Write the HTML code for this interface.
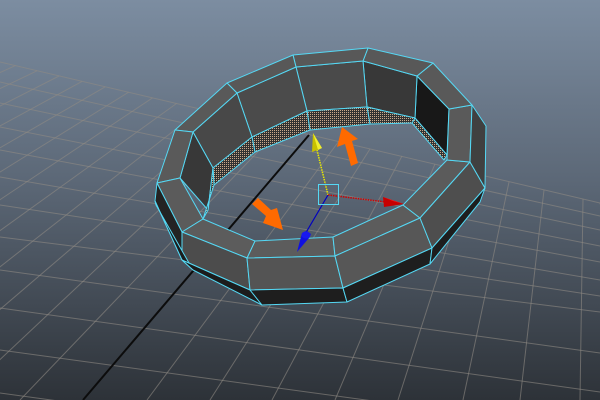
<!DOCTYPE html>
<html><head><meta charset="utf-8"><style>
html,body{margin:0;padding:0;width:600px;height:400px;overflow:hidden;background:#56626f}
svg{display:block;overflow:hidden}
</style></head><body>
<svg width="600" height="400" viewBox="0 0 600 400" xmlns="http://www.w3.org/2000/svg">
<defs>
<linearGradient id="bg" x1="0" y1="0" x2="0" y2="1">
<stop offset="0" stop-color="#7c8da1"/>
<stop offset="0.45" stop-color="#5c6877"/>
<stop offset="1" stop-color="#2d3238"/>
</linearGradient>
<pattern id="dots" width="2" height="2" patternUnits="userSpaceOnUse">
<rect width="2" height="2" fill="#323232"/>
<rect width="1" height="1" fill="#c9a88a"/>
</pattern>
</defs>
<rect width="600" height="400" fill="url(#bg)"/>
<g stroke="#8f8a84" stroke-width="1" stroke-opacity="0.6" fill="none">
<line x1="15.5" y1="65.6" x2="-725" y2="400"/>
<line x1="37" y1="70.8" x2="-650" y2="400"/>
<line x1="59" y1="76" x2="-577" y2="400"/>
<line x1="82" y1="81.4" x2="-505" y2="400"/>
<line x1="105" y1="86.9" x2="-435" y2="400"/>
<line x1="128.6" y1="92.2" x2="-367" y2="400"/>
<line x1="152.4" y1="97.9" x2="-300" y2="400"/>
<line x1="176.5" y1="103.5" x2="-235" y2="400"/>
<line x1="201" y1="109.4" x2="-170" y2="400"/>
<line x1="227" y1="115.4" x2="-106" y2="400"/>
<line x1="253" y1="121.5" x2="-43" y2="400"/>
<line x1="280.6" y1="128" x2="20" y2="400"/>
<line x1="339" y1="141" x2="147" y2="400"/>
<line x1="370" y1="149" x2="210" y2="400"/>
<line x1="402" y1="156" x2="272" y2="400"/>
<line x1="435" y1="164" x2="335" y2="400"/>
<line x1="471" y1="172" x2="398" y2="400"/>
<line x1="509" y1="182" x2="463" y2="400"/>
<line x1="544" y1="190" x2="520" y2="400"/>
<line x1="583" y1="199" x2="580" y2="400"/>
<line x1="600" y1="203" x2="607" y2="230"/>
<line x1="0" y1="62" x2="600" y2="203"/>
<line x1="0" y1="82" x2="600" y2="216"/>
<line x1="0" y1="103" x2="600" y2="230"/>
<line x1="0" y1="127" x2="600" y2="246"/>
<line x1="0" y1="150" x2="600" y2="262"/>
<line x1="0" y1="177" x2="600" y2="280"/>
<line x1="0" y1="205" x2="600" y2="296"/>
<line x1="0" y1="237" x2="600" y2="312"/>
<line x1="0" y1="270" x2="600" y2="353"/>
<line x1="0" y1="308" x2="600" y2="392"/>
<line x1="0" y1="350" x2="600" y2="432"/>
<line x1="0" y1="393" x2="600" y2="475"/>
</g>
<line x1="309" y1="135" x2="83" y2="400" stroke="#0c0c0c" stroke-width="2"/>

<g stroke="#55d8f4" stroke-width="1" stroke-linejoin="round">
<polygon points="449,109 417,76 415,118 447,155" fill="#181818"/>
<polygon points="417,76 363,61 367,107 415,118" fill="#383838"/>
<polygon points="363,61 296,67 307,111 367,107" fill="#4a4a4a"/>
<polygon points="296,67 237,93 252,137 307,111" fill="#4b4b4b"/>
<polygon points="237,93 193,132 213,168 252,137" fill="#484848"/>
<polygon points="193,132 180,178 208,210 213,168" fill="#383838"/>
<polygon points="447,155 415,118 412,123 444,160" fill="url(#dots)"/>
<polygon points="415,118 367,107 370,124 412,123" fill="url(#dots)"/>
<polygon points="367,107 307,111 310,130 370,124" fill="url(#dots)"/>
<polygon points="307,111 252,137 255,152 310,130" fill="url(#dots)"/>
<polygon points="252,137 213,168 214,185 255,152" fill="url(#dots)"/>
<polygon points="213,168 208,210 203,219 214,185" fill="url(#dots)"/>
<polygon points="255,241 333,237 335,256 247,258" fill="#5c5c5c"/>
<polygon points="333,237 403,205 420,218 335,256" fill="#5c5c5c"/>
<polygon points="403,205 447,160 470,162 420,218" fill="#5b5b5b"/>
<polygon points="447,160 449,109 472,105 470,162" fill="#5a5a5a"/>
<polygon points="449,109 417,76 433,63 472,105" fill="#595959"/>
<polygon points="417,76 363,61 368,48 433,63" fill="#585858"/>
<polygon points="363,61 296,67 293,55 368,48" fill="#585858"/>
<polygon points="296,67 237,93 227,83 293,55" fill="#585858"/>
<polygon points="237,93 193,132 175,130 227,83" fill="#595959"/>
<polygon points="193,132 180,178 157,183 175,130" fill="#5a5a5a"/>
<polygon points="180,178 203,219 182,232 157,183" fill="#5b5b5b"/>
<polygon points="203,219 255,241 247,258 182,232" fill="#5c5c5c"/>
<polygon points="157,183 182,232 182,260 155,201" fill="#232323"/>
<polygon points="182,232 247,258 250,290 182,260" fill="#4c4c4c"/>
<polygon points="247,258 335,256 343,288 250,290" fill="#545454"/>
<polygon points="335,256 420,218 432,248 343,288" fill="#575757"/>
<polygon points="420,218 470,162 485,188 432,248" fill="#4e4e4e"/>
<polygon points="470,162 472,105 486,126 485,188" fill="#404040"/>
<polygon points="155,201 182,260 193,270 156,205" fill="#1c1c1c"/>
<polygon points="182,260 250,290 262,305 193,270" fill="#1c1c1c"/>
<polygon points="250,290 343,288 347,302 262,305" fill="#1e1e1e"/>
<polygon points="343,288 432,248 430,264 347,302" fill="#1e1e1e"/>
<polygon points="432,248 485,188 480,202 430,264" fill="#1e1e1e"/>
</g>

<line x1="328" y1="195" x2="317" y2="150" stroke="#e8e800" stroke-width="1.5" stroke-dasharray="1.5 1"/>
<polygon points="313,133 312,152 322,148" fill="#c8c000"/>
<polygon points="313,133 318,150 322,148" fill="#f0ee30"/>
<line x1="328" y1="195" x2="386" y2="202" stroke="#d00000" stroke-width="1.5" stroke-dasharray="1.5 1"/>
<polygon points="383,197 384,207 404,204" fill="#c80000"/>
<polygon points="383,197 393,201 404,204" fill="#ff2020"/>
<line x1="328" y1="195" x2="304" y2="236" stroke="#0000c0" stroke-width="1.2"/>
<polygon points="302,233 306,231 311,234 309,238 297,252" fill="#1010e0"/>
<ellipse cx="306" cy="235" rx="4.5" ry="3.5" fill="#1818f0"/>
<rect x="318.5" y="184.5" width="20" height="20" fill="none" stroke="#55d8f4" stroke-width="1"/>

<polygon points="342,127 337,147 345,144 351,166 358,163 352,141 358,139" fill="#ff6a00"/>
<polygon points="283,230 263,223 266,216 252,204 258,198 271,210 277,208" fill="#ff6a00"/>
</svg>
</body></html>
